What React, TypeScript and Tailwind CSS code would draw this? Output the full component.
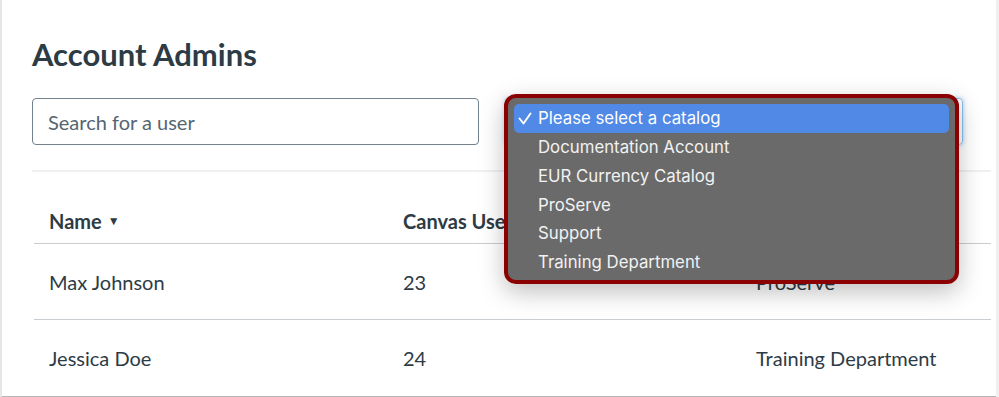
import React from "react";

const rows = [
  { name: "Max Johnson", id: "23", catalog: "ProServe" },
  { name: "Jessica Doe", id: "24", catalog: "Training Department" },
];

const options = [
  "Please select a catalog",
  "Documentation Account",
  "EUR Currency Catalog",
  "ProServe",
  "Support",
  "Training Department",
];

export default function App() {
  return (
    <div className="w-[999px] h-[397px] bg-white relative overflow-hidden" style={{ fontFamily: "Lato, 'Liberation Sans', sans-serif" }}>
      <div className="flex h-full">
        <div className="w-[2px] bg-[#e6e6e6]" />
        <div className="flex-1 flex flex-col">
          <div className="flex-1 flex flex-col pl-[30px] pr-[5px]">
            <h1 className="mt-[36px] text-[31px] leading-[36px] font-bold text-[#2d3b45]">Account Admins</h1>
            <div className="mt-[26px] flex gap-[26px] w-[931px]">
              <div className="w-[447px] h-[47px] border border-[#73818c] rounded-[4px] flex items-center pl-[15px] pt-[1px] text-[20px] text-[#556572]">
                Search for a user
              </div>
              <div className="flex-1 h-[47px] border border-[#8fc0ee] rounded-[4px] shadow-[0_0_4px_rgba(80,150,230,0.5)] flex items-center justify-end pr-[4px] text-[8px] text-[#555]">
                ▾
              </div>
            </div>
            <div className="mt-[25px] h-[2px] bg-[#eef0f2]" />
            <div className="pl-[2px] w-[959px]">
              <div className="flex h-[72px] items-end pb-[7px] border-b border-[#c7cdd1] text-[20px] font-bold text-[#2d3b45]">
                <div className="w-[354px] pl-[15px] flex items-center gap-[6px]">
                  Name <span className="text-[12px]">▼</span>
                </div>
                <div className="w-[353px] pl-[15px]">Canvas User ID</div>
                <div className="flex-1 pl-[15px]">Catalog</div>
              </div>
              {rows.map((r, i) => (
                <div key={r.name} className={`flex h-[76px] items-center text-[20px] text-[#2d3b45] ${i === 0 ? "border-b border-[#c7cdd1]" : ""}`}>
                  <div className="w-[354px] pl-[15px]">{r.name}</div>
                  <div className="w-[353px] pl-[15px]">{r.id}</div>
                  <div className="flex-1 pl-[15px]">{r.catalog}</div>
                </div>
              ))}
            </div>
          </div>
          <div className="h-[2px] bg-[#b4b4b4]" />
          <div className="h-[1px] bg-white" />
        </div>
        <div className="w-[3px] bg-[#f0f0f0]" />
      </div>

      <div
        className="absolute left-[504px] top-[94px] w-[455px] h-[190px] rounded-[12px] border-[4px] border-[#8b0000] bg-[#6a6a6a] shadow-[0_8px_24px_rgba(0,0,0,0.25)] px-[6px] pt-[6px]"
        style={{ fontFamily: "Inter, 'Liberation Sans', sans-serif" }}
      >
        {options.map((o, i) => (
          <div
            key={o}
            className={`h-[28.8px] flex items-center text-[16.8px] text-[#f2f2f2] rounded-[5px] pt-[1px] ${i === 0 ? "bg-[#5089e6] text-white" : ""}`}
          >
            <span className="w-[24px] pl-[4px] flex items-center">
              {i === 0 ? (
                <svg width="14" height="13" viewBox="0 0 14 13" fill="none">
                  <path d="M1.5 6.5 L5.5 11.5 L12.5 1.5" stroke="white" strokeWidth="2" strokeLinecap="round" strokeLinejoin="round" />
                </svg>
              ) : null}
            </span>
            <span>{o}</span>
          </div>
        ))}
      </div>
    </div>
  );
}
